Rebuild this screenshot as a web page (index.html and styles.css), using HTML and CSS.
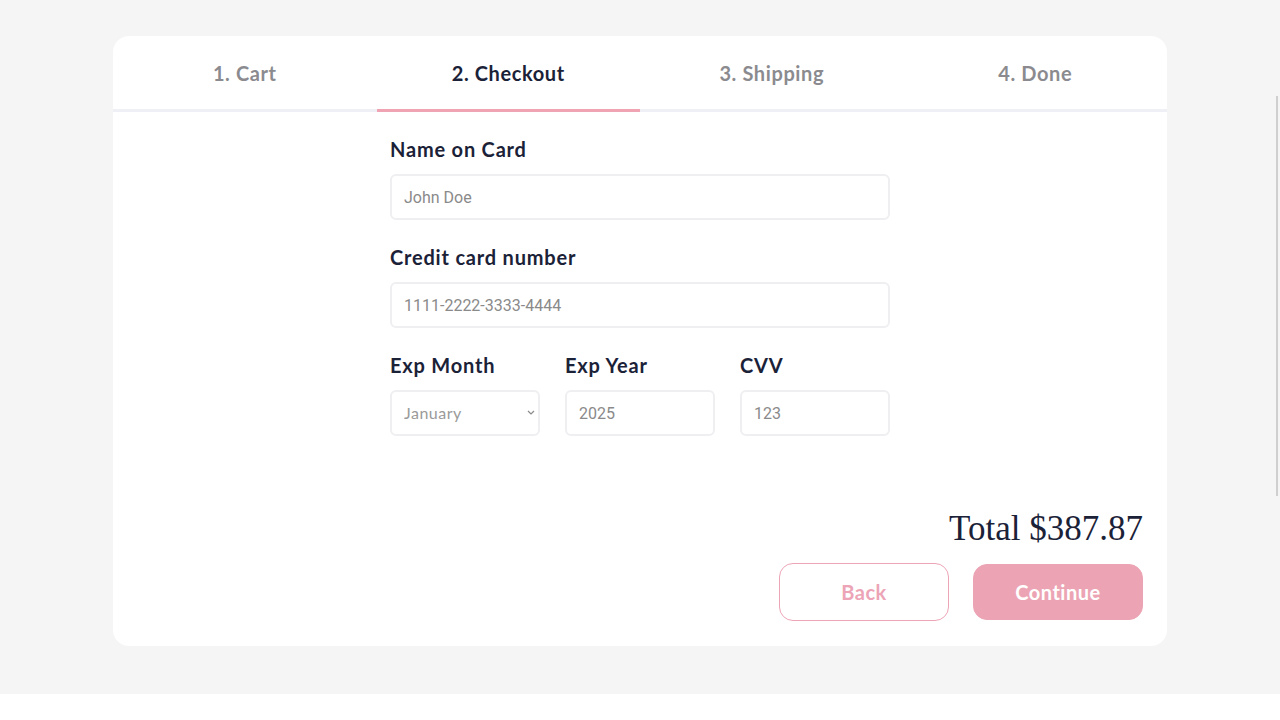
FILE: index.html
```html
<!DOCTYPE html>
<html lang="en">
<head>
<meta charset="utf-8">
<title>Checkout</title>
<link rel="stylesheet" href="styles.css">
</head>
<body>
<div class="page">
  <div class="card">
    <nav class="tabs">
      <div class="tab">1. Cart</div>
      <div class="tab active">2. Checkout</div>
      <div class="tab">3. Shipping</div>
      <div class="tab">4. Done</div>
    </nav>
    <form class="form">
      <label class="label">Name on Card</label>
      <input class="input" type="text" placeholder="John Doe">
      <label class="label">Credit card number</label>
      <input class="input" type="text" placeholder="1111-2222-3333-4444">
      <div class="row">
        <div class="col">
          <label class="label">Exp Month</label>
          <div class="select-wrap">
            <select class="input select">
              <option>January</option>
            </select>
            <svg class="chev" width="8" height="5" viewBox="0 0 8 5"><path d="M1 1l3 3 3-3" fill="none" stroke="#8a8a8a" stroke-width="1.2"/></svg>
          </div>
        </div>
        <div class="col">
          <label class="label">Exp Year</label>
          <input class="input" type="text" placeholder="2025">
        </div>
        <div class="col">
          <label class="label">CVV</label>
          <input class="input" type="text" placeholder="123">
        </div>
      </div>
    </form>
    <div class="footer">
      <div class="total">Total $387.87</div>
      <div class="buttons">
        <button class="btn btn-back" type="button">Back</button>
        <button class="btn btn-continue" type="button">Continue</button>
      </div>
    </div>
  </div>
  <div class="scroll-thumb"></div>
</div>
</body>
</html>
```
FILE: styles.css
```css
* { box-sizing: border-box; }
html, body { margin: 0; padding: 0; background: #ffffff; }
body { font-family: "Lato", "Open Sans", sans-serif; color: #1b2238; }
.page {
  position: relative;
  background: #f5f5f5;
  height: 694px;
  padding: 36px 113px 48px 113px;
}
.card {
  background: #ffffff;
  border-radius: 16px;
  height: 610px;
  display: flex;
  flex-direction: column;
  overflow: hidden;
}
.tabs {
  display: grid;
  grid-template-columns: repeat(4, 1fr);
  border-bottom: 3px solid #efeff6;
}
.tab {
  height: 73px;
  display: flex;
  align-items: center;
  justify-content: center;
  font-size: 20px;
  font-weight: 700;
  letter-spacing: 0.6px;
  color: #8b8b8f;
  margin-bottom: -3px;
  border-bottom: 3px solid transparent;
  box-sizing: content-box;
}
.tab.active { color: #1b2238; border-bottom-color: #f0a3b3; }
.form {
  width: 500px;
  margin: 0 auto;
  padding-top: 23px;
  display: flex;
  flex-direction: column;
}
.label {
  display: block;
  font-size: 20px;
  font-weight: 700;
  letter-spacing: 0.8px;
  line-height: 28px;
  color: #1b2238;
  margin-bottom: 11px;
}
.input {
  display: block;
  width: 100%;
  height: 46px;
  border: 2px solid #efeff2;
  border-radius: 6px;
  padding: 0 12px;
  font-family: "Roboto", sans-serif;
  font-size: 16px;
  color: #8a8a8a;
  background: #ffffff;
  outline: none;
  margin-bottom: 23px;
}
.input::placeholder { color: #8a8a8a; }
.row {
  display: grid;
  grid-template-columns: repeat(3, 1fr);
  gap: 25px;
}
.select-wrap { position: relative; }
.select {
  appearance: none;
  -webkit-appearance: none;
  font-family: "Lato", sans-serif;
  letter-spacing: 0.5px;
  color: #9a9a9a;
  line-height: 42px;
  padding-bottom: 2px;
}
.chev { position: absolute; right: 5px; top: 20px; }
.footer {
  margin-top: auto;
  padding: 0 24px 25px 0;
  display: flex;
  flex-direction: column;
  align-items: flex-end;
}
.total {
  font-family: "Liberation Serif", "DejaVu Serif", serif;
  font-size: 35px;
  line-height: 44px;
  color: #1b2238;
  margin-bottom: 12px;
}
.buttons { display: flex; gap: 24px; }
.btn {
  width: 170px;
  height: 58px;
  border-radius: 14px;
  font-family: "Lato", sans-serif;
  font-size: 20px;
  font-weight: 700;
  letter-spacing: 0.5px;
  cursor: pointer;
}
.btn-back { background: #ffffff; border: 1px solid #eca4b6; color: #eca4b6; }
.btn-continue { background: #eca4b4; border: 1px solid #eca4b4; color: #ffffff; height: 56px; margin-top: 1px; }
.scroll-thumb {
  position: absolute;
  right: 2px;
  top: 96px;
  width: 2px;
  height: 400px;
  background: #cfcfcf;
}
```
